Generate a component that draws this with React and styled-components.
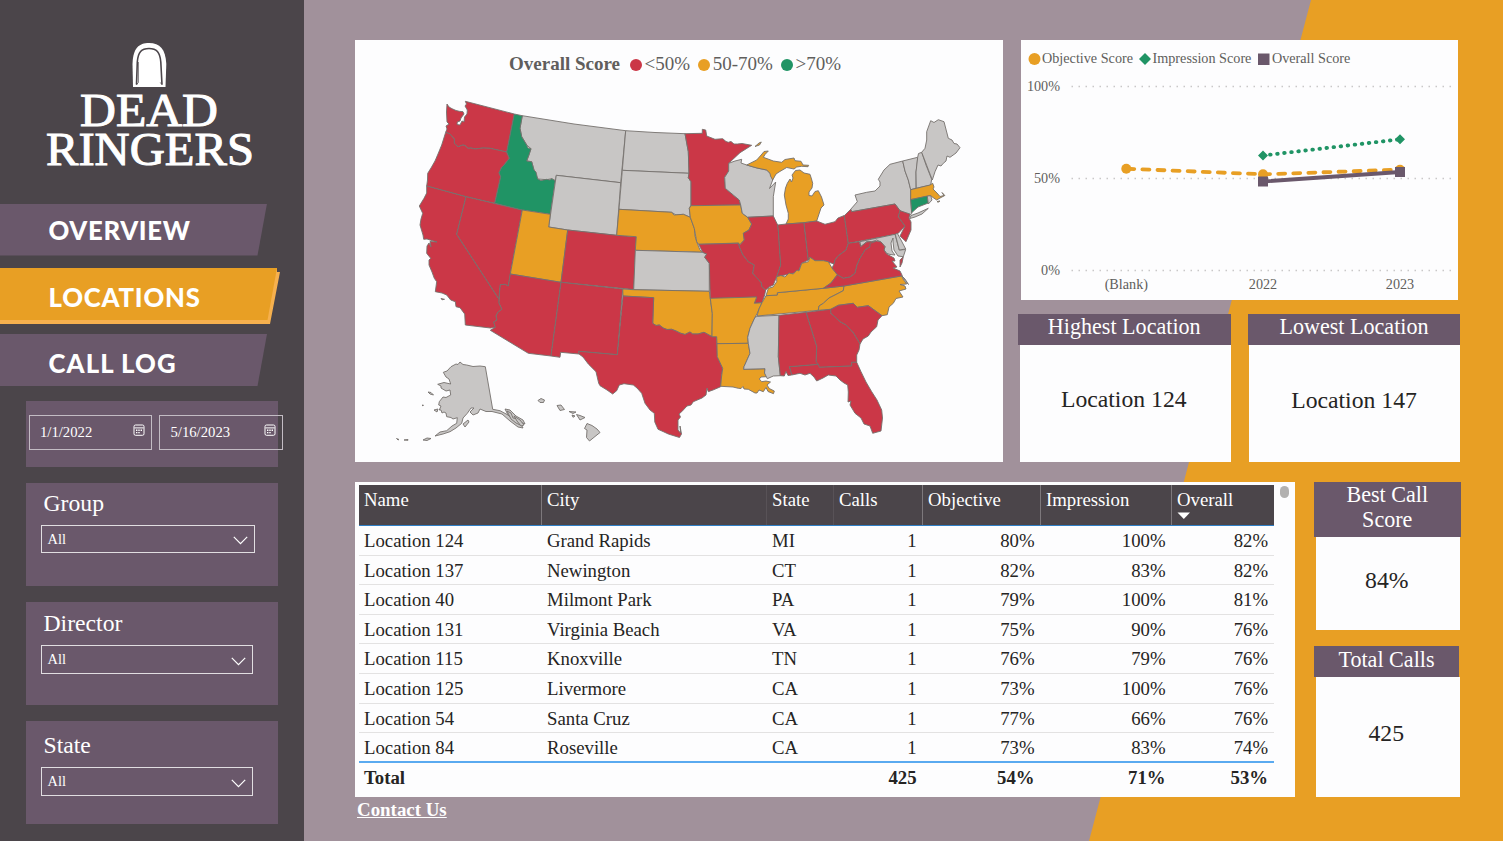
import React from "react";
import styled, { createGlobalStyle } from "styled-components";

const C = {
  dark: "#4b454a",
  plum: "#6a586b",
  mauve: "#a1919b",
  orange: "#e89f24",
  red: "#cb3747",
  green: "#209465",
  gray: "#c8c6c5",
  card: "#fdfdfe",
  ink: "#252423",
  label: "#605e5c",
};

const GlobalStyle = createGlobalStyle`
  * { box-sizing: border-box; }
  body { margin: 0; overflow: hidden; font-family: "Liberation Serif", "Times New Roman", serif; }
`;

const Page = styled.div`
  display: flex;
  width: 1503px;
  height: 841px;
  overflow: hidden;
  background: ${C.orange};
`;

/* ---------- sidebar ---------- */
const Sidebar = styled.aside`
  width: 304px;
  flex: none;
  height: 100%;
  background: ${C.dark};
  display: flex;
  flex-direction: column;
`;
const Brand = styled.header`
  height: 203.5px;
  padding: 40px 0 0 40px;
`;
const Nav = styled.nav`
  height: 197.5px;
  display: flex;
  flex-direction: column;
`;
const NavItem = styled.a`
  display: block;
  width: 267px;
  height: 52px;
  padding-left: 48.5px;
  background: ${C.plum};
  color: #fff;
  font: 900 25.7px/${(p) => p.$line}px Lato, sans-serif;
  letter-spacing: ${(p) => p.$track}px;
  clip-path: polygon(0 0, 100% 0, calc(100% - 9.5px) 100%, 0 100%);
`;
const NavActive = styled.div`
  width: 280px;
  height: 56px;
  margin: 12.5px 0 10px;
  background: #f6b04e;
  clip-path: polygon(0 0, 277px 0, 277px 4px, 280px 4px, 270px 100%, 0 100%);
`;
const NavActiveItem = styled(NavItem)`
  width: 277px;
  background: ${C.orange};
`;
const Panel = styled.section`
  width: 251.5px;
  height: ${(p) => p.$h}px;
  margin: 0 0 16.4px 26px;
  padding: ${(p) => p.$pad};
  background: ${C.plum};
  color: #fff;
`;
const DateRow = styled.div`
  display: flex;
  gap: 7px;
`;
const DateBox = styled.div`
  flex: none;
  width: 123.5px;
  height: 34.5px;
  padding: 0 6px 0 10.5px;
  border: 1px solid #c3bcc4;
  display: flex;
  justify-content: space-between;
  font-size: 14.7px;
  line-height: 33px;
  svg { margin-top: 8px; }
`;
const PanelTitle = styled.h2`
  margin: 0 0 0 3px;
  font-size: 23.7px;
  font-weight: 400;
  line-height: 28px;
  height: ${(p) => p.$h}px;
`;
const Select = styled.div`
  width: ${(p) => p.$w}px;
  height: 28.5px;
  padding: 0 6px;
  border: 1px solid #e1dee1;
  display: flex;
  justify-content: space-between;
  font-size: 14.4px;
  line-height: 27px;
  svg { margin-top: 10.5px; }
`;

/* ---------- main ---------- */
const Main = styled.main`
  flex: 1;
  padding: 40px 0 0 51px;
  position: relative;
  isolation: isolate;
  &::before {
    content: "";
    position: absolute;
    z-index: -1;
    inset: 0;
    background: ${C.mauve};
    clip-path: polygon(0 0, 1007px 0, 785px 100%, 0 100%);
  }
`;
const TopRow = styled.div`
  display: flex;
  height: 422px;
  gap: 15px;
`;
const MapCard = styled.section`
  width: 647.5px;
  background: ${C.card};
  display: flex;
  flex-direction: column;
`;
const MapLegend = styled.div`
  display: flex;
  align-items: center;
  height: 49px;
  padding-left: 154px;
  font-size: 19px;
  color: ${C.label};
`;
const LegendTitle = styled.b`
  width: 121px;
  line-height: 20px;
  padding-bottom: 2px;
`;
const LegendItem = styled.span`
  display: flex;
  align-items: center;
  gap: 2.5px;
  margin-right: 8.2px;
  line-height: 20px;
  padding-bottom: 2px;
  &::before {
    content: "";
    width: 12px;
    height: 12px;
    margin-top: 2px;
    border-radius: 50%;
    background: ${(p) => p.$c};
  }
`;
const TopSide = styled.div`
  width: 443px;
  display: flex;
  flex-direction: column;
`;
const ChartCard = styled.section`
  margin: 0 0 14.5px 3.5px;
  width: 437px;
  height: 259.5px;
  background: ${C.card};
`;
const ChartLegend = styled.div`
  display: flex;
  height: 37px;
  align-items: center;
  gap: 6px;
  padding-left: 6.5px;
  font-size: 14.2px;
  color: ${C.label};
  span { display: flex; align-items: center; gap: 1.5px; white-space: nowrap; }
`;
const StatRow = styled.div`
  display: flex;
  gap: 17px;
`;
const Stat = styled.section`
  width: ${(p) => p.$w}px;
  height: ${(p) => p.$h}px;
  display: flex;
  flex-direction: column;
`;
const StatTitle = styled.h3`
  margin: 0 ${(p) => p.$r || 0}px 0 0;
  padding-top: ${(p) => p.$pt || 0}px;
  height: ${(p) => p.$h}px;
  background: ${C.plum};
  color: #fff;
  text-align: center;
  font-size: 22.1px;
  font-weight: 400;
  line-height: 25px;
`;
const StatValue = styled.div`
  flex: 1;
  margin-left: ${(p) => p.$l}px;
  margin-right: ${(p) => p.$r || 0}px;
  padding: ${(p) => p.$pt}px ${(p) => p.$shift || 0}px 0 0;
  background: ${C.card};
  color: ${C.ink};
  text-align: center;
  font-size: ${(p) => p.$f || 23.7}px;
  line-height: 28px;
`;
const BottomRow = styled.div`
  display: flex;
  height: 315.5px;
  margin-top: 19.5px;
  gap: 19px;
`;
const TableCard = styled.section`
  width: 940px;
  padding: 3.5px 6px 0 3.5px;
  background: ${C.card};
  display: flex;
  justify-content: space-between;
`;
const Table = styled.div`
  width: 915.5px;
  font-size: 18.75px;
  color: ${C.ink};
`;
const Row = styled.div`
  display: grid;
  grid-template-columns: 183px 225px 67px 89px 118px 131px 102.5px;
  height: 29.6px;
  line-height: 29px;
  border-bottom: ${(p) => (p.$last ? "2px solid #5aaaf0" : "1px solid #e3e2e2")};
`;
const HeadRow = styled(Row)`
  height: 41px;
  line-height: 30px;
  background: ${C.dark};
  color: #fff;
  border-bottom: 1px solid #2f7fc6;
`;
const TotalRow = styled(Row)`
  border: 0;
  font-weight: 700;
`;
const Cell = styled.div`
  padding: 0 6px 0 5.5px;
  text-align: ${(p) => (p.$num ? "right" : "left")};
`;
const HeadCell = styled.div`
  padding: 0 5.5px;
  border-right: 1px solid ${(p) => (p.$faint ? "#585257" : "#7d787c")};
  &:last-child { border: 0; }
  svg { display: block; margin-top: -3px; }
`;
const ScrollThumb = styled.div`
  width: 9px;
  height: 11.5px;
  margin-top: 1px;
  border-radius: 4.5px;
  background: #b2b1b0;
`;
const StatColumn = styled.div`
  display: flex;
  flex-direction: column;
  gap: 16px;
`;
const Contact = styled.a`
  display: block;
  margin: 2px 0 0 2px;
  color: #fff;
  font-size: 18.9px;
  line-height: 21px;
  font-weight: 700;
  text-decoration: underline;
`;

/* ---------- map data ---------- */
const STATES = [
  ["WA", "red", "447,104 449,107 452,108.7 456,110.5 459.3,111.3 463,111.7 464,114 461,118 460,121 457.3,122 457,124.5 460,125 462,121 464,122 464.5,117 467,114 467.3,110 465,106 466.5,104 465.3,101.3 514.3,114 506.7,152 490,148.3 483,148 475,149 471,148 468,148.3 465,145.5 462.7,145 458,146.7 454.3,143.3 454.3,139 450,134 445.7,132.3 447,129 446,126 449,124 447,122 446.5,112"],
  ["OR", "red", "445.7,132.3 450,134 454.3,139 454.3,143.3 458,146.7 462.7,145 465,145.5 468,148.3 471,148 475,149 483,148 490,148.3 506.7,152 509.3,158.3 504,165 501.7,167.3 499,172.7 500.7,176.7 494.7,203.3 466,196.7 426.7,186 427.5,180 427.7,173.3 431,168 435,161 438,154 441.7,145"],
  ["CA", "red", "426.7,186 466,196.7 456.7,234.3 499,299.3 499,303 502,309.3 498,312 496,316 497,320 493.7,322 495.3,327.3 490.5,328 465.3,325 464.7,314 460,307.7 456,306.7 455.3,301.7 450.7,300 446.7,295 442,293 435.3,291.7 436.7,281.7 434.3,278.3 432,272 429,265 429,260 430.7,258.3 428,255 426.7,253.3 427,246 429,243 431,247 430,241.5 437,242 430,240 427,239 423.7,239.3 423,235 420,225 421,219 422.7,213.3 419.3,206 424,198.3 426.7,193"],
  ["NV", "red", "466,196.7 522.3,210 510.3,274 508.3,286 505,284.3 500.3,284.7 499.5,292 499,299.3 456.7,234.3"],
  ["MT", "gray", "522.3,115.7 574,124 625.7,130.7 620.7,182.7 556.3,175.3 555.3,180.7 551.7,178.7 546.7,179.7 537.7,179 534,170 531.7,161.7 526.7,161 531,148.7 526.7,145 521.7,136.7 520,128.3"],
  ["ID", "green", "514.3,114 522.3,115.7 520,128.3 521.7,136.7 526.7,145 528,148 531,148.7 529,155 526.7,161 531.7,161.7 534,170 536,172 537.7,179 541,180.5 546.7,179.3 550,180 551.7,178.7 555.3,180.7 550.3,214.3 522.3,210 494.7,203.3 500.7,176.7 499,172.7 501.7,167.3 504,165 509.3,158.3 506.7,152"],
  ["WY", "gray", "556.3,175.3 620.7,182.7 616.7,235.3 567.7,230 548.7,227"],
  ["UT", "orange", "522.3,210 550.3,214.3 548.7,227 567.7,230 561,282.3 510.3,274"],
  ["CO", "red", "567.7,230 616.7,235.3 636.3,236.7 633.7,289.5 561,282.3"],
  ["AZ", "red", "510.3,274 561,282.3 551,356 528.3,353.3 490.3,330.3 495.3,327.3 493.7,322 497,320 496,316 498,312 502,309.3 499,303 499.5,292 500.3,284.7 505,284.3 508.3,286"],
  ["NM", "red", "561,282.3 622.7,289 617.3,354.7 578.7,351.3 579,354 560.7,352.3 560,357.3 551,356"],
  ["ND", "gray", "625.7,130.7 655,132.5 685,133.7 688.3,151.7 689,173.3 622.3,170.3"],
  ["SD", "gray", "622.3,170.3 689,173.3 688.3,177.7 691,181.7 691,205 689.3,208.3 690.3,217.3 683.3,214.3 676,215 671.7,212.3 619,209.3"],
  ["NE", "orange", "619,209.3 671.7,212.3 674,215 683.3,214.3 690.3,217.3 694.3,228.3 695,236 696.7,241.7 700,250 702.7,252.3 635.3,250.3 636.3,236.7 616.7,235.3"],
  ["KS", "gray", "635.3,250.3 702.7,252.3 706.7,254 704.7,257.3 709.3,263.3 709.3,291.3 633.7,289.7"],
  ["OK", "orange", "622.7,289 633.7,289.7 709.3,291.3 710.3,298.3 712.3,313.3 712,336.7 704,332.3 698,334 692.7,334 690,332 685,334.5 680,333 676,331 671.7,329.3 667,329.5 663.3,328 659.3,325 656,325.5 652.7,323.3 653.7,297.7 623,296"],
  ["TX", "red", "623,296 653.7,297.7 652.7,323.3 656,325.5 659.3,325 663.3,328 667,329.5 671.7,329.3 676,331 680,333 685,334.5 690,332 692.7,334 698,334 704,332.3 712,336.7 716.7,336.7 717.3,356.7 722.7,368.3 721.5,377 720.7,386.7 713,390 708.3,391.7 707,388 706,395 702,398 693.3,401.7 691,405 687,406 681.7,411.7 679,414 680.5,417 678,420 678,430 680.5,433 680,426 681.5,434 679.5,437.5 668.3,434 663,431.5 658,429.3 654.8,422 654.3,413.3 650,410 645,403.3 641.7,393.3 637,388 633.3,385 624,383.7 619.3,385 616.7,390.7 612.7,394 607,390 600,385.7 598.7,383.3 596,371.7 588.3,364 583,357 579,354 578.7,351.3 617.3,354.7"],
  ["MN", "red", "685,133.7 702.3,133.3 702.3,129.3 705.7,130 706.7,136 715,139.3 722.7,138.7 726,141.5 728.3,142.3 731,141.5 734,144 737.3,144 742,143.5 751.7,145.3 740,152.7 729.3,162.7 728.7,171.7 724.7,177.3 725.3,188.3 733.3,195 739.3,200 740.7,205 691,205.7 691,181.7 688.3,177.7 689,173.3 688.3,151.7"],
  ["IA", "orange", "691,205.7 740.7,205 742.3,213.3 747.7,217.3 751.7,224 749,230 743.3,233.3 744.3,240 740,244.7 738.3,243 698.7,244.3 696.7,241.7 694.3,228.3 690.3,217.3 689.3,208.3"],
  ["MO", "red", "698.7,244.3 738.3,243.3 740,248.3 743,255 748.3,261.7 754.3,265 752.7,273.3 761.3,282.7 762,287 765.7,290 764.7,295 762,302.7 754.3,303.3 756.7,297 710.3,298.7 709.3,263.3 704.7,257.3 706.7,254 702.7,252.3"],
  ["AR", "orange", "710.3,298.3 756.7,297 754.3,303.3 762,302.7 759,309 757.3,313.3 755,317.3 750,328.3 747.7,337.3 748.3,343.3 717,343.7 716.7,336.7 712,336.7 712.3,313.3"],
  ["LA", "orange", "717,343.7 748.3,343.3 750,353.3 747,360 744,366.7 743.7,369.3 765,368.7 764.5,373 766.7,376.7 761,377 759.3,379 761.7,381.7 766,381 770.5,382 767,385 769.3,388.5 774.3,391 773.5,393.7 768,391.5 766,387.5 763.3,391.7 759,390 757,393 755,393 748.3,389.3 744,389 743,386.5 741,388.5 738.3,388.3 733,387 720.7,386.3 721.5,377 722.7,368.3 717.3,356.7"],
  ["MS", "gray", "757.3,316.3 779,315.3 778.3,356.7 780.3,375.7 773.3,376 767.3,378.7 764.5,373 765,368.7 743.7,369.3 744,366.7 747,360 750,353.3 748.3,343.3 747.7,337.3 750,328.3 755,317.3"],
  ["WI", "gray", "728.7,171 728.7,163.3 735,161 741.7,159.3 741,163 746.7,165 757,168 766.7,170 771.7,175 772.7,180 769.5,188.5 775.7,182 773.3,196.7 773.3,216 747.7,217.3 742.3,213.3 740.7,205 739.3,200 733.3,195 725.3,188.3 724.7,177.3"],
  ["UP", "orange", "746.7,165 756.7,160 762,154 764,151.5 768.3,151 765,154.5 763.3,157.3 768,159 773.3,161 781.7,162.3 785,159.5 794,158 795,160.7 801,161.3 803,165 808.7,165.3 808,166.7 801.7,166.3 796.7,167 794,169 786.7,167.5 779,172 776,174 772.7,180 770.5,176 770,173.3 766.7,170 757,168"],
  ["IR", "orange", "755,146.5 759,143 761.3,142 759.5,145"],
  ["MI", "orange", "795.5,170.5 800,170 804,173 810,174.3 811.5,179 812.7,183.3 812,188 809,192 809,195.5 812,196 815,191.5 818.3,190.7 821.5,197 824,205 821,208 819,214 816.7,221 804,222.7 786,224 788.3,219 788.3,213.3 786,205 784.3,195 785.5,188 787.3,183.3 790,179 791.5,182 793,178 792,175"],
  ["IL", "red", "747.7,217.3 773.3,216 777.7,225 778.3,230 780.7,265 779,270 776.7,276.7 773.3,285 769,287 765.7,290 762,287 761.3,282.7 752.7,273.3 754.3,265 748.3,261.7 743,255 740,248.3 738.3,243.3 740,244.7 744.3,240 743.3,233.3 749,230 751.7,224"],
  ["IN", "red", "777.7,225 786,224 804,222.7 804.7,230 808.3,260 801.7,263.3 799,270 793.3,273.3 785,275 776.7,276.7 779,270 780.7,265 778.3,230"],
  ["OH", "red", "804,222.7 816.7,221 825,224.3 835,221.7 838,218 844.3,215.5 848.3,243.3 846,250 838,256 835,260 834,264 828,262 823.3,260.7 815,260.7 810,257.3 808.3,260"],
  ["TN", "orange", "766,295.7 777.3,295 777.3,292.7 823.3,288.3 844,286 843.3,290.7 835,295 829,298 823.3,303.3 819,306 818.3,310.3 757,316 759,309 762,302.7"],
  ["KY", "orange", "766,295.7 768.3,288.3 773,287 776.7,281.7 776.7,276.7 781,275.5 785,277 789,273 793.3,274 797,270 799,271 801.7,263.3 808.3,261.7 810,257.3 815,260.7 823.3,260.7 828.3,261.7 832,268 837.3,274.7 831,283 823.3,288.3 777.3,292.7 777.3,295"],
  ["NC", "orange", "844,286 901.7,276 903,279 906.7,284 900,284.5 905,286 906,289 899,291 901,294 903,297 896,298.5 893.3,303.3 889,307 887.3,314.7 882,315.7 868.3,305.7 857.3,307.3 853.3,303.3 838.3,305.3 830.7,309.3 818.3,310.3 819,306 823.3,303.3 829,298 835,295 843.3,290.7"],
  ["SC", "red", "830.7,309.3 838.3,305.3 853.3,303.3 857.3,307.3 868.3,305.7 882,315.7 878,320 876.7,326.7 871,332 868.3,336 863,339 860,344 853.3,332.7 846,325 840,321.7 834,316 830.7,313.3"],
  ["GA", "red", "806,312.3 830.7,309.3 830.7,313.3 834,316 840,321.7 846,325 853.3,332.7 860,344 859,350 856.7,355 856.7,362.3 851.7,362.3 851.7,366 819.3,367.3 816,361.7 816.7,346.7"],
  ["FL", "red", "789.3,366.7 818.3,364.3 819.3,367.3 851.7,366 851.7,362.3 856.7,362.3 861,371.7 866,382 871.7,391.7 877,400 881.7,410 882.5,418 881,431 872.7,433.3 870,426 864,424 861,418 855,413.3 850,405 851,401 848,402 848.3,392 847.7,385 844,383 840,380 836,376 828.3,375 823,378 816.7,381 814,377 810,373.3 805,375 800,373.3 791.7,375"],
  ["AL", "red", "779,315.3 806,312.3 816.7,346.7 816,361.7 818.3,364.3 789.3,366.7 791.7,375 788,375.5 786,371.5 784.3,376 780.3,375.7 778.3,356.7"],
  ["NY", "gray", "850.7,209.3 857.3,201.7 855,195 866.7,192.3 875,191 880,186 880,182 878.3,179.3 884,170 890,164.3 902.7,161 905,171 908.3,180 910.7,189.7 910.7,200 911.7,213.3 910,215.5 900,210.7 895,204 851.7,211.7"],
  ["LI", "gray", "909.8,218.5 911,215.5 918,213 928.3,208.3 922,214 915,217"],
  ["PA", "red", "844.3,215.7 850.7,209.3 851.7,211.7 895,204 900,210.7 898.3,216.7 905,226 898.3,233.3 895.7,234.3 848.3,243.3"],
  ["NJ", "red", "900,210.7 910,214 909,218 911,222 911,230 906,241.7 900,236 905,226 898.3,216.7"],
  ["VT", "gray", "902.7,161 917.7,157.3 917,165 916,172 916,188.3 910.7,189.7 908.3,180 905,171"],
  ["NH", "gray", "917.7,157.3 918.5,153.5 921.7,152.3 926,165 931.7,179.3 930.7,185 916.3,188.3 916,172"],
  ["ME", "gray", "921.7,152.3 925,148.3 926.7,140 926.7,131.7 930.7,120.7 934,122.5 938.3,119.7 944,121.7 948.3,138.3 952,140 954,143.5 957,144 960,147.7 956,153 950,157.3 947,156 946,161 943.3,163.3 941,166 938,165 935,171.7 932.3,180"],
  ["MA", "orange", "910.7,189.7 930,185 932.7,183.3 934,187 933,189 937,193 940,196.5 944,195.5 942,192.5 944.8,195.5 941,197.5 936.7,200 933,197.5 930.7,195.7 910.7,199.5"],
  ["CT", "green", "910.7,199.7 927.3,196 928.3,203 918,207 911.7,212.7"],
  ["RI", "gray", "927.3,196 930.7,195.7 932,200 928.3,204"],
  ["MD", "gray", "860,241.7 895,234.3 899.3,250 905.7,249.5 903.3,256.7 898,256 894,250 893,242 893,238 891,243 892,251 895,255 890,254.5 886.7,253.3 884,250 885,246.7 881,242 876.7,240 871.7,241.7 866.7,241.7 860.7,246.7"],
  ["DE", "gray", "895.3,234.3 897.3,233.3 901,240 905.7,249 899.3,250"],
  ["WV", "red", "848.3,243.3 859.3,241.7 860.7,246.7 866.7,242 871.7,241.7 876.7,241.5 870,246.7 865,250 860,258.3 857,265 855,273.3 850,277 843.3,278.3 837.3,274.7 832,268 834,264 835,260 838,256 846,250"],
  ["VA", "red", "823.3,288.3 831,283 837.3,274.7 843.3,278.3 850,277 855,273.3 857,265 860,258.3 865,250 870,246.7 870,243.5 876.7,241 881,242 885,246.7 884,250 886.7,254 894,258 895,261 892,261 897,267 893,268 900,271 902.3,275.7 844,286"],
  ["ES", "red", "903.3,256.7 902,263 900,267 900,260"],
  ["OB", "gray", "902,276 905,279 908.5,284.5 905,280.5"],
  ["AK", "gray", "443.3,372.3 447,371 451,366.7 456,364 458,364.5 460,362 463,364.5 466.7,365 473,366.5 480,366 485.3,366.7 489,388 492.7,409.3 500,410.7 508,415 515,418 521,424 523,428 518,427 510,421 502,414 492,411.5 486,411.5 480,409 478,413 473,415 470,412 474,408 471,408 467.3,413.3 463,418 461.7,423.3 456,428 450,431.7 443,434 435,436 440,432 446.7,430.7 452,426 456.7,423.3 457.3,417.7 453,419 451,417.5 446.7,416.7 446,413 444,412 442,413 441,410 439.3,410 441,406 438.7,405 439.3,401.7 443,397 446,397.500 450.7,395 450,390 446,391 441,388 441,386 437.7,384.3 444,382.5 450.7,384 449,379 446,377"],
  ["AK2", "gray", "463,424 468,420 469,422 465,427"],
  ["AK3", "gray", "428,392 431,392.5 433.5,395 430,394"],
  ["AK4", "gray", "423,440 427,438 431,438.5 427,440.5"],
  ["AK5", "gray", "434,410 438,409 437,412"],
  ["AK6", "gray", "505,409 510,410 516,416 523,420 525,424 520,422 514,421 508,415"],
  ["AK10", "gray", "507,411 511,413 513,418 518,419 520,425 516,423 511,419"],
  ["AK11", "gray", "514,416 520,420 524,425 521,426 517,421"],
  ["AK7", "gray", "396.5,438.5 399,439.5 398,440"],
  ["AK8", "gray", "404,440 408,439.5 408,440.3"],
  ["AK9", "gray", "422,405.2 423.3,405 423,406"],
  ["H1", "gray", "538,400.5 541,398.5 544.5,400 543.5,402.5 540,402.5"],
  ["H2", "gray", "557,405.5 561,405 564.5,409.5 560,410.5"],
  ["H3", "gray", "569,411.5 576,412 573,413.5"],
  ["H4", "gray", "572,415 575,416 573,417.3"],
  ["H5", "gray", "576.5,414.5 580,415.5 585,417.5 580,420"],
  ["H6", "gray", "587,423.5 592,425.5 597,429 600,432.5 595,436.5 589.5,441 586.5,437.5 587,430 584.5,428.5"],
  ["CI", "red", "441,298.5 444.5,299.3 442,299.8"],
  ["NI", "orange", "937,201.5 940,201 938,202.3"],
];

const UsMap = () => (
  <svg width="647" height="373" viewBox="355 89 647 373" role="img" aria-label="Overall score by state">
    {STATES.map(([id, tone, pts]) => (
      <polygon key={id} points={pts} fill={C[tone]} stroke="#75706d" strokeWidth="0.9" strokeLinejoin="round" />
    ))}
  </svg>
);

const Wordmark = styled.svg`
  display: block;
  overflow: visible;
`;
const Logo = () => (
  <Wordmark width="224" height="150" viewBox="40 40 224 150">
    <path d="M133 87 L132.5 64 C133 48 139 43 149 43 C160 43 165.5 49 166.3 64 L165.5 87 Z" fill="#fff" />
    <path d="M136.5 84.5 L137.3 62 C138 52 141.5 48.5 149 48.500 C156.5 48.5 160 52 160.8 62 L162 84.5" fill="none" stroke={C.dark} strokeWidth="1.6" strokeLinejoin="round" />
    <path d="M136.300 85 L138.300 82.500 L138.300 62 M162.300 85 L160.300 82.500" fill="none" stroke={C.dark} strokeWidth="0.8" />
    <g fill="#fff" stroke="#fff" strokeWidth="1" fontFamily='"Liberation Serif", serif' fontSize="46">
      <text x="80" y="125.700" textLength="138" lengthAdjust="spacingAndGlyphs">DEAD</text>
      <text x="46" y="164.700" textLength="208" lengthAdjust="spacingAndGlyphs">RINGERS</text>
    </g>
  </Wordmark>
);

const CalendarIcon = () => (
  <svg width="12" height="13" viewBox="0 0 12 13" fill="none" stroke="#fff">
    <rect x="1" y="1" width="10" height="10.300" rx="1.500" />
    <path d="M1.500 3.900h9" />
    <path d="M3 6.300h6.200M3 8.600h4.200" strokeDasharray="1.400 0.900" strokeWidth="1.400" />
  </svg>
);
const Chevron = () => (
  <svg width="15" height="9" viewBox="0 0 15 9" fill="none" stroke="#fff" strokeWidth="1.2">
    <path d="M0.800 0.800L7.500 7.700L14.200 0.800" />
  </svg>
);

const LineChart = () => (
  <svg width="437" height="222" viewBox="1021 77 437 222">
    <g stroke="#c9c8c8" strokeWidth="1.3" strokeDasharray="1.5 5.5">
      <path d="M1071.500 86.500H1455M1071.500 178.500H1455M1071.500 270.500H1455" />
    </g>
    <g fontFamily='"Liberation Serif", serif' fontSize="14.2" fill={C.label}>
      <g textAnchor="end">
        <text x="1060" y="91">100%</text>
        <text x="1060" y="183">50%</text>
        <text x="1060" y="275">0%</text>
      </g>
      <g textAnchor="middle">
        <text x="1126.300" y="289">(Blank)</text>
        <text x="1263" y="289">2022</text>
        <text x="1400" y="289">2023</text>
      </g>
    </g>
    <g fill="none" strokeLinecap="round" strokeWidth="3.8">
      <path d="M1126.300 168.700L1263 174.300L1400 169.700" stroke={C.orange} strokeDasharray="7 8.1" strokeDashoffset="-1" />
      <path d="M1263 155.500L1400 139.300" stroke={C.green} strokeDasharray="0.6 6.500" />
      <path d="M1263 181.500L1400 172" stroke={C.plum} />
    </g>
    <g fill={C.orange}>
      <circle cx="1126.300" cy="168.700" r="5" />
      <circle cx="1263" cy="174.300" r="5" />
      <circle cx="1400" cy="169.700" r="5" />
    </g>
    <path d="M1263 150.500l5 5-5 5-5-5zM1400 134.300l5 5-5 5-5-5z" fill={C.green} />
    <path d="M1258 176.500h10v10h-10zM1395 167h10v10h-10z" fill={C.plum} />
  </svg>
);

const ROWS = [
  ["Location 124", "Grand Rapids", "MI", "1", "80%", "100%", "82%"],
  ["Location 137", "Newington", "CT", "1", "82%", "83%", "82%"],
  ["Location 40", "Milmont Park", "PA", "1", "79%", "100%", "81%"],
  ["Location 131", "Virginia Beach", "VA", "1", "75%", "90%", "76%"],
  ["Location 115", "Knoxville", "TN", "1", "76%", "79%", "76%"],
  ["Location 125", "Livermore", "CA", "1", "73%", "100%", "76%"],
  ["Location 54", "Santa Cruz", "CA", "1", "77%", "66%", "76%"],
  ["Location 84", "Roseville", "CA", "1", "73%", "83%", "74%"],
];
const HEADS = ["Name", "City", "State", "Calls", "Objective", "Impression", "Overall"];
const TOTALS = ["Total", "", "", "425", "54%", "71%", "53%"];

const Slicer = ({ title, h, top, head, width }) => (
  <Panel $h={h} $pad={`${top}px 0 0 14.5px`}>
    <PanelTitle $h={head}>{title}</PanelTitle>
    <Select $w={width}>All<Chevron /></Select>
  </Panel>
);

export default function App() {
  return (
    <Page>
      <GlobalStyle />
      <Sidebar>
        <Brand><Logo /></Brand>
        <Nav>
          <NavItem $track={0.65} $line={52.5}>OVERVIEW</NavItem>
          <NavActive><NavActiveItem $track={0.8} $line={58}>LOCATIONS</NavActiveItem></NavActive>
          <NavItem $track={1.1} $line={59}>CALL LOG</NavItem>
        </Nav>
        <Panel $h={66} $pad="14px 0 0 2.5px">
          <DateRow>
            <DateBox>1/1/2022<CalendarIcon /></DateBox>
            <DateBox>5/16/2023<CalendarIcon /></DateBox>
          </DateRow>
        </Panel>
        <Slicer title="Group" h={102.5} top={6} head={35.5} width={214.5} />
        <Slicer title="Director" h={102.5} top={7} head={36} width={212.5} />
        <Slicer title="State" h={102.5} top={9.5} head={36.5} width={212.5} />
      </Sidebar>
      <Main>
        <TopRow>
          <MapCard>
            <MapLegend>
              <LegendTitle>Overall Score</LegendTitle>
              <LegendItem $c={C.red}>&lt;50%</LegendItem>
              <LegendItem $c={C.orange}>50-70%</LegendItem>
              <LegendItem $c={C.green}>&gt;70%</LegendItem>
            </MapLegend>
            <UsMap />
          </MapCard>
          <TopSide>
            <ChartCard>
              <ChartLegend>
                <span><svg width="13" height="13"><circle cx="6.500" cy="7" r="6" fill={C.orange} /></svg>Objective Score</span>
                <span><svg width="12" height="13"><path d="M6 1l6 6-6 6-6-6z" fill={C.green} /></svg>Impression Score</span>
                <span><svg width="13" height="13"><path d="M1 1.500h11.500v11.500h-11.500z" fill={C.plum} /></svg>Overall Score</span>
              </ChartLegend>
              <LineChart />
            </ChartCard>
            <StatRow>
              <Stat $w={213.5} $h={148}>
                <StatTitle $h={30.5}>Highest Location</StatTitle>
                <StatValue $l={2.5} $pt={40} $shift={3.5}>Location 124</StatValue>
              </Stat>
              <Stat $w={212} $h={148}>
                <StatTitle $h={30.5}>Lowest Location</StatTitle>
                <StatValue $l={1} $pt={41} $shift={1}>Location 147</StatValue>
              </Stat>
            </StatRow>
          </TopSide>
        </TopRow>
        <BottomRow>
          <TableCard>
            <Table>
              <HeadRow>
                {HEADS.map((h, i) => (
                  <HeadCell key={h} $faint={i === 1 || i === 2}>
                    {h}
                    {h === "Overall" && <svg width="14" height="8"><path d="M0.500 0.500h12.500l-6.200 6.500z" fill="#fff" /></svg>}
                  </HeadCell>
                ))}
              </HeadRow>
              {ROWS.map((r, n) => (
                <Row key={r[0]} $last={n === ROWS.length - 1}>
                  {r.map((v, i) => <Cell key={i} $num={i > 2}>{v}</Cell>)}
                </Row>
              ))}
              <TotalRow>{TOTALS.map((v, i) => <Cell key={i} $num={i > 2}>{v}</Cell>)}</TotalRow>
            </Table>
            <ScrollThumb />
          </TableCard>
          <StatColumn>
            <Stat $w={146.5} $h={148.5}>
              <StatTitle $h={55}>Best Call<br />Score</StatTitle>
              <StatValue $l={2} $r={1} $pt={29} $shift={2}>84%</StatValue>
            </Stat>
            <Stat $w={146.5} $h={151}>
              <StatTitle $h={30.5} $pt={1} $r={1.5}>Total Calls</StatTitle>
              <StatValue $l={2} $r={1} $pt={42} $shift={3}>425</StatValue>
            </Stat>
          </StatColumn>
        </BottomRow>
        <Contact>Contact Us</Contact>
      </Main>
    </Page>
  );
}
